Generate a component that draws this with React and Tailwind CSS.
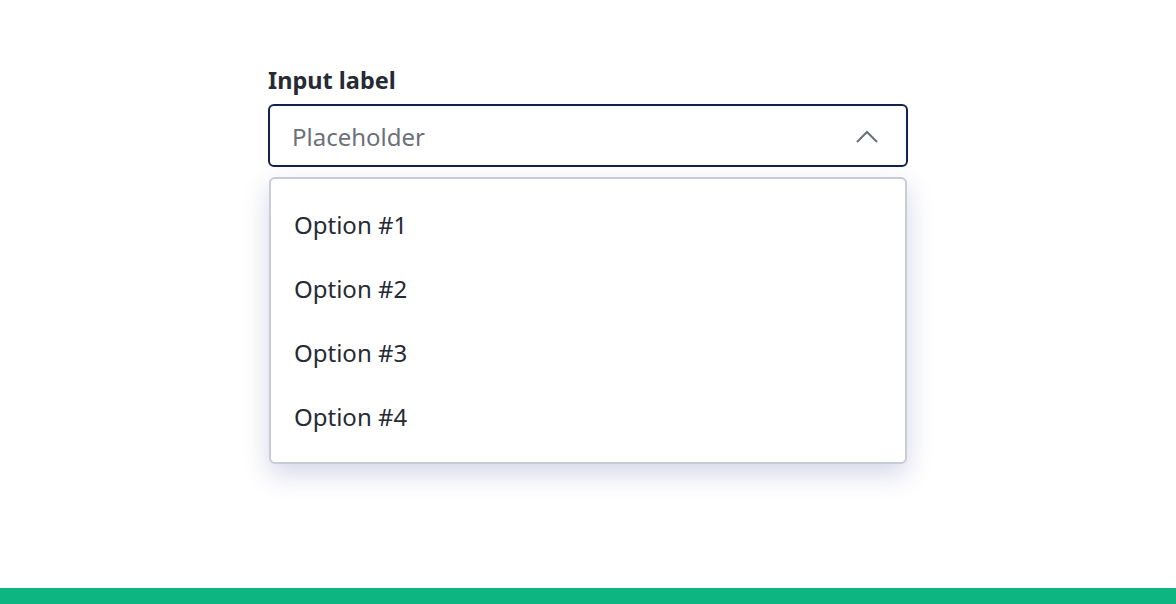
import React from 'react';

const options = ['Option #1', 'Option #2', 'Option #3', 'Option #4'];

const App = () => {
  return (
    <div className="min-h-screen flex flex-col bg-white" style={{ fontFamily: '"Noto Sans", "Open Sans", sans-serif' }}>
      <div className="flex-1 pt-[65px]">
        <div className="w-[640px] mx-auto">
          <label className="block text-[23.5px] leading-[31px] font-bold text-[#262a33] mb-[8px]">Input label</label>
          <div className="h-[63px] border-2 border-[#14214f] rounded-[6px] pl-[22px] pr-[28px] flex items-center justify-between">
            <span className="text-[24px] leading-[32px] text-[#6d7079] mt-[2px]">Placeholder</span>
            <svg width="22" height="13" viewBox="0 0 22 13" fill="none" className="mt-[1px]">
              <path d="M1 12L11 2L21 12" stroke="#6b6f78" strokeWidth="2" />
            </svg>
          </div>
          <div className="mt-[10px] mx-[1px] bg-white border-2 border-[#c8cbda] rounded-[6px] pt-[14px] pb-[13px] shadow-[0_10px_26px_rgba(60,70,150,0.22)]">
            <ul>
              {options.map((opt) => (
                <li key={opt} className="h-[64px] flex items-center px-[23px] text-[24px] text-[#262a33] cursor-pointer hover:bg-gray-50">
                  {opt}
                </li>
              ))}
            </ul>
          </div>
        </div>
      </div>
      <div className="h-4 bg-[#0db580]" />
    </div>
  );
};

export default App;
